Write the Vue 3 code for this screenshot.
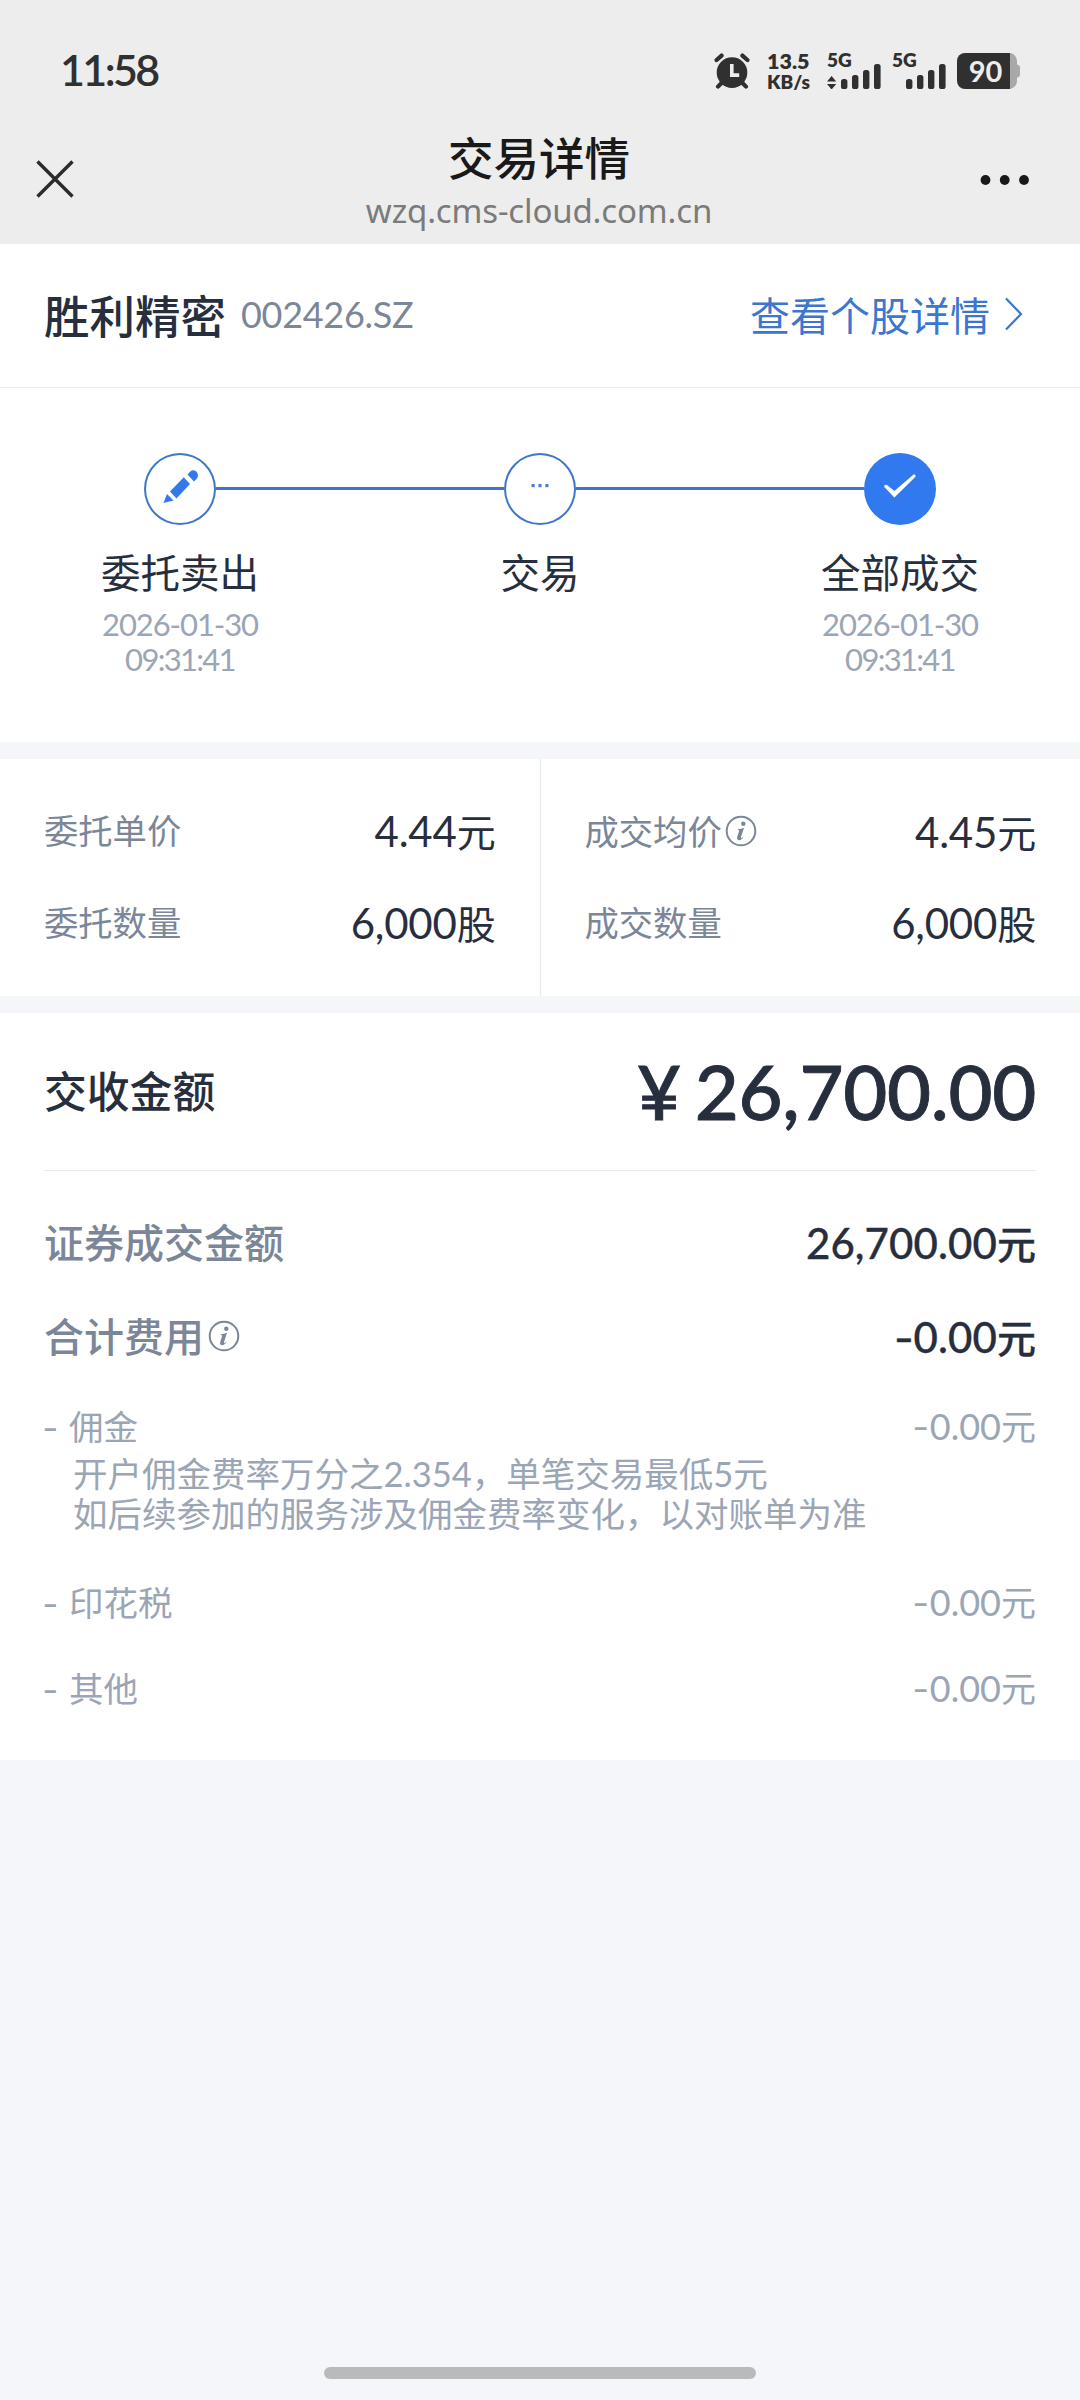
<script setup>
const steps = [
  { icon: 'edit', label: '委托卖出', date: '2026-01-30', time: '09:31:41' },
  { icon: 'dots', label: '交易' },
  { icon: 'check', label: '全部成交', date: '2026-01-30', time: '09:31:41' },
]

const columns = [
  [
    { label: '委托单价', value: '4.44', unit: '元' },
    { label: '委托数量', value: '6,000', unit: '股' },
  ],
  [
    { label: '成交均价', value: '4.45', unit: '元', info: true },
    { label: '成交数量', value: '6,000', unit: '股' },
  ],
]

const totals = [
  { label: '证券成交金额', value: '26,700.00' },
  { label: '合计费用', sign: '-', value: '0.00', info: true },
]

const fees = [
  {
    label: '佣金',
    value: '0.00',
    notes: ['开户佣金费率万分之2.354，单笔交易最低5元', '如后续参加的服务涉及佣金费率变化，以对账单为准'],
  },
  { label: '印花税', value: '0.00' },
  { label: '其他', value: '0.00' },
]
</script>

<template>
  <div class="page">
    <header class="top">
      <div class="status">
        <span class="clock">11:58</span>
        <div class="status-icons">
          <svg class="alarm" width="36" height="36" viewBox="0 0 36 36">
            <g fill="none" stroke="#303030" stroke-width="4.2" stroke-linecap="round">
              <path d="M2.6 7 7.6 2.6M28.4 2.6l5 4.4" />
              <path d="M7.5 30 4 33.6M28.5 30l3.5 3.6" />
            </g>
            <circle cx="18" cy="19.6" r="15.3" fill="#303030" />
            <path d="M17.8 11v11.1h7.4" fill="none" stroke="#ededed" stroke-width="3.6" />
          </svg>
          <div class="speed"><span>13.5</span><span class="unit-kb">KB/s</span></div>
          <div class="signal">
            <span class="net">5G</span>
            <svg width="54" height="36" viewBox="0 0 54 36" fill="#303030">
              <path d="M0 28.5 4.6 23l4.6 5.5zM0 31h9.2l-4.6 5.5z" />
              <rect x="14" y="26" width="6.4" height="10" rx="2.6" />
              <rect x="25" y="22" width="6.4" height="14" rx="2.6" />
              <rect x="36" y="17" width="6.4" height="19" rx="2.6" />
              <rect x="47" y="11" width="6.6" height="25" rx="2.6" />
            </svg>
          </div>
          <div class="signal second">
            <span class="net">5G</span>
            <svg width="54" height="36" viewBox="0 0 54 36" fill="#303030">
              <rect x="14" y="26" width="6.4" height="10" rx="2.6" />
              <rect x="25" y="22" width="6.4" height="14" rx="2.6" />
              <rect x="36" y="17" width="6.4" height="19" rx="2.6" />
              <rect x="47" y="11" width="6.6" height="25" rx="2.6" />
            </svg>
          </div>
          <div class="battery">
            <svg width="63" height="36" viewBox="0 0 63 36">
              <path d="M52 0h1a8 8 0 0 1 7 8v3.500q3 .5 3 3v7q0 2.500-3 3V28a8 8 0 0 1-7 8h-1z" fill="#a8a8a8" />
              <path d="M8 0h45v36H8a8 8 0 0 1-8-8V8a8 8 0 0 1 8-8z" fill="#303030" />
            </svg>
            <span>90</span>
          </div>
        </div>
      </div>
      <nav class="nav">
        <svg class="close" width="38" height="40" viewBox="0 0 38 40">
          <path d="M1.500 2.500l35 35M36.500 2.500l-35 35" stroke="#2b2b2b" stroke-width="3.400" />
        </svg>
        <div class="titles">
          <h1>交易详情</h1>
          <p>wzq.cms-cloud.com.cn</p>
        </div>
        <svg class="more" width="50" height="12" viewBox="0 0 50 12" fill="#191919">
          <circle cx="5.500" cy="6" r="4.900" /><circle cx="24.700" cy="6" r="4.900" /><circle cx="44" cy="6" r="4.900" />
        </svg>
      </nav>
    </header>

    <section class="stock">
      <strong>胜利精密</strong>
      <span class="code">002426.SZ</span>
      <a class="link">查看个股详情
        <svg width="18" height="34" viewBox="0 0 18 34" fill="none" stroke="#3c76cf" stroke-width="2.200">
          <path d="M1 1.500 16 17 1 32.500" />
        </svg>
      </a>
    </section>

    <section class="steps">
      <div v-for="s in steps" :key="s.label" class="step">
        <div class="rail">
          <i class="line"></i>
          <div class="dot" :class="{ done: s.icon === 'check' }">
            <svg width="72" height="72" viewBox="0 0 72 72">
              <g v-if="s.icon === 'edit'" fill="#3079ee">
                <path d="M43.500 21.500 46 18.700q4-3 7 .5 2.200 4-.5 6.700L50 28.500z" />
                <path d="M39.800 24.200 46 31 32.500 45.500 26 38.500z" />
                <path d="M23 41 29.500 47.500 19.500 50z" />
              </g>
              <g v-else-if="s.icon === 'dots'" fill="#4a80d0">
                <rect x="27.500" y="31" width="3.200" height="3.200" />
                <rect x="34.400" y="31" width="3.200" height="3.200" />
                <rect x="41.300" y="31" width="3.200" height="3.200" />
              </g>
              <path v-else d="M20.700 32.300q1-1 2.300-.2l7.400 6L49.600 21.600q1.500-.4 2 .8.200.9-.4 1.500L30.400 44.500 20.300 34q-.4-1 .4-1.700z" fill="#fff" />
            </svg>
          </div>
          <i class="line"></i>
        </div>
        <p class="step-label">{{ s.label }}</p>
        <p v-if="s.date" class="when">{{ s.date }}<br /><span>{{ s.time }}</span></p>
      </div>
    </section>

    <section class="quote">
      <div v-for="(col, i) in columns" :key="i" class="col">
        <div v-for="c in col" :key="c.label" class="cell" :class="{ low: c.info }">
          <span class="label">{{ c.label }}</span>
          <svg v-if="c.info" class="info" width="32" height="32" viewBox="0 0 32 32">
            <circle cx="16" cy="16" r="14.300" fill="none" stroke="#7b8698" stroke-width="2" />
            <circle cx="18.300" cy="8.800" r="2.200" fill="#7b8698" />
            <path d="M12.500 14.300q3.900-.3 6.600-1.500L16 22q-.3 1.500.7 1.100l2-1.800q-1.800 4-4.800 4-2.400-.4-1.700-3.200l2-6.300z" fill="#7b8698" />
          </svg>
          <span class="num">{{ c.value }}<em>{{ c.unit }}</em></span>
        </div>
      </div>
    </section>

    <section class="detail">
      <div class="settle">
        <span class="settle-label">交收金额</span>
        <span class="amount"><b>¥</b>26,700.00</span>
      </div>
      <div v-for="t in totals" :key="t.label" class="total">
        <span class="label">{{ t.label }}</span>
        <svg v-if="t.info" class="info" width="32" height="32" viewBox="0 0 32 32">
          <circle cx="16" cy="16" r="14.300" fill="none" stroke="#7b8698" stroke-width="2" />
          <circle cx="18.300" cy="8.800" r="2.200" fill="#7b8698" />
          <path d="M12.500 14.300q3.900-.3 6.600-1.500L16 22q-.3 1.500.7 1.100l2-1.800q-1.800 4-4.800 4-2.400-.4-1.700-3.200l2-6.300z" fill="#7b8698" />
        </svg>
        <span class="num"><i v-if="t.sign" class="minus">{{ t.sign }}</i>{{ t.value }}<em>元</em></span>
      </div>
      <div v-for="f in fees" :key="f.label" class="fee">
        <div class="fee-row">
          <span class="fee-label"><i class="dash"><i class="minus">-</i></i>{{ f.label }}</span>
          <span class="fee-num"><i class="minus">-</i>{{ f.value }}<em>元</em></span>
        </div>
        <div v-if="f.notes" class="notes">
          <p v-for="n in f.notes" :key="n">{{ n }}</p>
        </div>
      </div>
    </section>

    <footer class="home"><i></i></footer>
  </div>
</template>

<style>
body {
  margin: 0;
  background: #f4f6fa;
}
</style>

<style scoped>
.page {
  width: 1080px;
  height: 2400px;
  display: flex;
  flex-direction: column;
  background: #f4f6fa;
  color: #272e3d;
  font-family: Lato, "Noto Sans CJK SC", sans-serif;
  overflow: hidden;
}
h1, p {
  margin: 0;
}
em, i {
  font-style: normal;
}
svg {
  display: block;
  flex: none;
}
.top {
  height: 244px;
  background: #ededed;
}
.status {
  height: 120px;
  padding: 0 60px;
  display: flex;
  justify-content: space-between;
}
.clock {
  line-height: 140px;
  font-size: 43px;
  font-weight: 600;
  letter-spacing: -2.6px;
  color: #303030;
}
.status-icons {
  display: flex;
  align-items: flex-start;
  padding-top: 53px;
  color: #303030;
}
.speed {
  width: 43px;
  margin: -3px 17px 0 17px;
  font-size: 21.5px;
  font-weight: 800;
  line-height: 22px;
  display: flex;
  flex-direction: column;
}
.unit-kb {
  font-size: 19px;
  line-height: 20px;
}
.signal {
  position: relative;
  width: 54px;
  margin-right: 11px;
}
.net {
  position: absolute;
  left: 0;
  top: -3px;
  font-size: 19px;
  line-height: 20px;
  font-weight: 800;
}
.battery {
  position: relative;
}
.battery span {
  position: absolute;
  left: 0;
  top: 0;
  width: 57px;
  line-height: 35px;
  font-size: 29px;
  font-weight: 700;
  text-align: center;
  color: #ededed;
}
.nav {
  height: 124px;
  display: flex;
  align-items: flex-start;
  padding: 0 50px 0 36px;
}
.close {
  margin-top: 39px;
}
.titles {
  flex: 1;
  padding-left: 24px;
  text-align: center;
}
.titles h1 {
  padding-top: 9px;
  font-size: 45.5px;
  font-weight: 500;
  line-height: 60px;
  color: #191919;
}
.titles p {
  padding-top: 2px;
  font-family: "Noto Sans", sans-serif;
  font-size: 33px;
  line-height: 40px;
  letter-spacing: -0.15px;
  color: #7b7b7b;
}
.more {
  margin-top: 54px;
}
.stock {
  height: 143px;
  box-sizing: border-box;
  display: flex;
  align-items: center;
  padding: 0 57px 3px 44px;
  background: #fff;
  flex: none;
}
.stock strong {
  font-size: 45.5px;
  font-weight: 500;
}
.code {
  margin-left: 15px;
  font-size: 36px;
  letter-spacing: -0.3px;
  color: #7b8698;
}
.link {
  display: flex;
  align-items: center;
  gap: 15px;
  margin-left: auto;
  font-size: 40px;
  color: #3c76cf;
}
.steps {
  height: 355px;
  padding-top: 65px;
  box-sizing: border-box;
  display: flex;
  background: #fff;
  border-top: 1px solid #e8e9eb;
  flex: none;
}
.step {
  flex: 1;
  text-align: center;
}
.rail {
  display: flex;
  align-items: center;
}
.line {
  flex: 1;
  height: 3px;
  margin-bottom: 1px;
  background: #3d76ca;
}
.step:first-child .line:first-child,
.step:last-child .line:last-child {
  background: transparent;
}
.dot {
  width: 72px;
  height: 72px;
  box-sizing: border-box;
  border-radius: 50%;
  box-shadow: inset 0 0 0 2px #3d76ca;
}
.dot.done {
  background: #3079ee;
  box-shadow: none;
}
.step-label {
  padding-top: 20px;
  font-size: 39.5px;
  line-height: 56px;
}
.when {
  padding-top: 6px;
  font-size: 31px;
  line-height: 35px;
  letter-spacing: -1.1px;
  color: #9ba5b5;
}
.when span {
  letter-spacing: -1.7px;
}
.quote {
  margin-top: 17px;
  height: 237px;
  flex: none;
  display: flex;
  background: #fff;
}
.col {
  flex: 1;
  box-sizing: border-box;
  padding: 25px 44px 0 44px;
}
.col + .col {
  border-left: 1px solid #e8e9eb;
}
.cell {
  height: 92px;
  display: flex;
  align-items: center;
}
.cell.low {
  padding-top: 2px;
  height: 90px;
}
.cell .label {
  padding-bottom: 3px;
  font-size: 34.3px;
  color: #7b8698;
}
.info {
  margin-left: 3px;
}
.num {
  margin-left: auto;
  padding-bottom: 1px;
  font-size: 42px;
  letter-spacing: -0.2px;
}
.num em {
  font-size: 39px;
}
.detail {
  margin-top: 17px;
  height: 747px;
  flex: none;
  box-sizing: border-box;
  padding: 0 44px;
  background: #fff;
}
.settle {
  height: 157px;
  display: flex;
  align-items: center;
  justify-content: space-between;
  border-bottom: 1px solid #e8e9eb;
  font-size: 42.8px;
  font-weight: 500;
  margin-bottom: 24px;
}
.settle-label {
  padding-bottom: 5px;
}
.amount {
  padding-bottom: 3px;
  font-size: 76px;
  letter-spacing: -0.3px;
  -webkit-text-stroke: 0.9px #272e3d;
  display: flex;
}
.amount b {
  font-weight: 500;
  margin-right: 14px;
}
.total {
  height: 94px;
  display: flex;
  align-items: center;
  font-weight: 500;
}
.total .label {
  padding-bottom: 3px;
  font-size: 40px;
  color: #7b8698;
}
.total .info {
  margin-left: 4px;
}
.total .num {
  -webkit-text-stroke: 0.3px #272e3d;
  letter-spacing: 0.1px;
}
.fee {
  height: 86px;
  color: #9ba5b5;
  font-size: 34.5px;
}
.fee-row {
  height: 86px;
  box-sizing: border-box;
  padding-bottom: 3px;
  display: flex;
  align-items: center;
  justify-content: space-between;
}
.fee:has(.notes) {
  height: 176px;
}
.dash {
  display: inline-block;
  width: 25px;
}
.minus {
  display: inline-block;
  margin-right: 2px;
  transform: scaleX(1.3);
}
.fee-num {
  font-size: 36px;
}
.fee-num em {
  font-size: 35px;
}
.notes {
  margin-top: -15px;
  padding-left: 29px;
  line-height: 40px;
}
.home {
  margin-top: auto;
  height: 33px;
  display: flex;
  justify-content: center;
}
.home i {
  width: 432px;
  height: 12px;
  border-radius: 6px;
  background: #b9babc;
}
</style>
